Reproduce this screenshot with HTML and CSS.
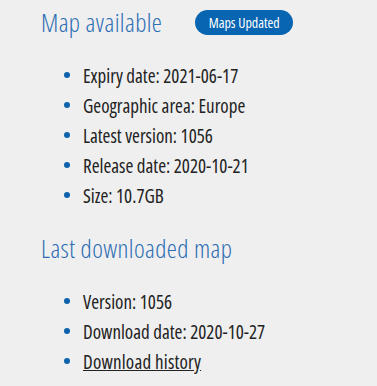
FILE: index.html
```html
<!DOCTYPE html>
<html>
<head>
<meta charset="utf-8">
<link rel="stylesheet" href="styles.css">
</head>
<body>
<main class="panel">
  <section class="block">
    <div class="head-row">
      <h2 class="title">Map available</h2>
      <span class="badge">Maps Updated</span>
    </div>
    <ul class="list">
      <li>Expiry date: 2021-06-17</li>
      <li>Geographic area: Europe</li>
      <li>Latest version: 1056</li>
      <li>Release date: 2020-10-21</li>
      <li>Size: 10.7GB</li>
    </ul>
  </section>
  <section class="block">
    <div class="head-row">
      <h2 class="title">Last downloaded map</h2>
    </div>
    <ul class="list">
      <li>Version: 1056</li>
      <li>Download date: 2020-10-27</li>
      <li><a class="link" href="#">Download history</a></li>
    </ul>
  </section>
</main>
</body>
</html>
```
FILE: styles.css
```css
html, body {
  margin: 0;
  padding: 0;
  background: #efefef;
}
body {
  font-family: "Open Sans", sans-serif;
  font-stretch: condensed;
  color: #222;
}
.panel {
  padding: 7px 0 0 41px;
}
.head-row {
  display: flex;
  align-items: center;
  gap: 33px;
  height: 30px;
}
.title {
  margin: 0;
  font-weight: 300;
  font-size: 25.5px;
  letter-spacing: 0.4px;
  line-height: 30px;
  color: #2c6db3;
}
.badge {
  display: inline-flex;
  align-items: center;
  justify-content: center;
  width: 98px;
  height: 25px;
  border-radius: 13px;
  background: #0865b2;
  color: #fff;
  font-size: 14px;
  margin-top: 1px;
}
.list {
  list-style: none;
  margin: 0;
  padding: 24px 0 0 23px;
}
.list li {
  position: relative;
  padding-left: 19px;
  font-size: 19px;
  line-height: 30px;
  height: 30px;
}
.list li::before {
  content: "";
  position: absolute;
  left: 0;
  top: 11px;
  width: 6px;
  height: 6px;
  border-radius: 50%;
  background: #0d62ad;
}
.block + .block {
  margin-top: 22px;
}
.link {
  color: #222;
  text-decoration: underline;
  letter-spacing: 0.2px;
}
```
